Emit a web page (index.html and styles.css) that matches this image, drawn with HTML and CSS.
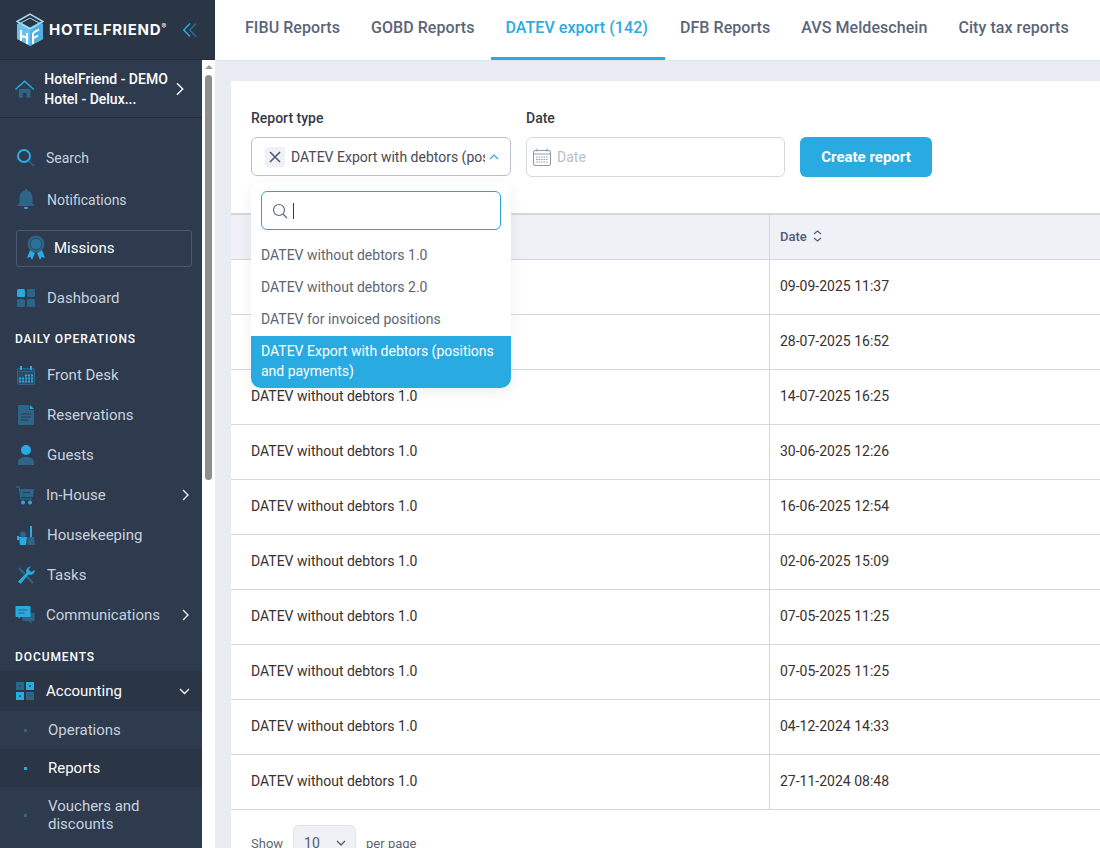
FILE: index.html
```html
<!DOCTYPE html>
<html lang="en">
<head>
<meta charset="utf-8">
<title>DATEV export</title>
<link rel="stylesheet" href="styles.css">
</head>
<body>
<div class="app">
  <aside class="sidebar">
    <div class="brand">
      <svg class="logo" width="28" height="33" viewBox="0 0 28 33"><path d="M14 5 27 11v15l-13 7-13-7V11z" fill="#6cc0ea"/><path d="M14 10 27 11v15l-13 7z" fill="#4fb0e2"/><path d="M1 8.500 14 1l13 7.500L14 16z" fill="none" stroke="#a9dcf3" stroke-width="1.500"/><path d="M5 10 14 5l9 5-9 5z" fill="#2a3546" stroke="#8fd0ee"/><path d="M5 17v11M11 20v11M5 23l6 1.500M17 20v11M17 20l6-3.500M17 25.500l5-3" stroke="#fff" stroke-width="2" fill="none"/></svg>
      <span class="brand-name">HOTELFRIEND<sup>®</sup></span>
      <svg class="collapse" width="14" height="14" viewBox="0 0 14 14" fill="none" stroke-width="1.500"><path d="M7 .5.8 7 7 13.500" stroke="#29abe2"/><path d="M13 .5 6.800 7 13 13.500" stroke="#2a6f96"/></svg>
    </div>
    <div class="side-body">
      <div class="side-column">
        <div class="hotel">
          <svg width="20" height="18" viewBox="0 0 20 18"><path d="M4 9h12v9h-4v-5H8v5H4z" fill="#2e6488"/><path d="M0 9 10 0l10 9-1 1-9-8-9 8z" fill="#29abe2"/></svg>
          <div class="hotel-name">HotelFriend - DEMO Hotel - Delux...</div>
          <svg width="9" height="14" viewBox="0 0 9 14" fill="none" stroke="#fff" stroke-width="1.500"><path d="m1 1 6 6-6 6"/></svg>
        </div>
        <nav class="nav">
          <a class="item item-search"><svg class="ico" width="20" height="20" viewBox="0 0 20 20" fill="none"><circle cx="8" cy="8" r="6" stroke="#29abe2" stroke-width="2"/><path d="m13 13 5 5" stroke="#2e6488" stroke-width="1.500"/></svg><span class="tight">Search</span></a>
          <a class="item item-notif"><svg class="ico" width="20" height="24" viewBox="0 0 20 24"><path d="M10 1c1 0 1.500.7 1.500 1.500C15 3.500 16.500 6 16.500 10v5l2.500 3H1l2.500-3v-5C3.500 6 5 3.500 8.500 2.500 8.500 1.700 9 1 10 1z" fill="#2e6488"/><path d="M8 19h4l-.5 2h-3z" fill="#29abe2"/></svg><span class="tight">Notifications</span></a>
          <a class="missions"><svg width="20" height="26" viewBox="0 0 20 26"><path d="M4 15 1 23l3.500-1L6 25l3-7zM16 15l3 8-3.500-1L14 25l-3-7z" fill="#29abe2"/><circle cx="10" cy="9" r="8.500" fill="#2e6488"/><circle cx="10" cy="9" r="5.800" fill="#2f7098" stroke="#24506f"/></svg><span>Missions</span></a>
          <a class="item item-dash"><svg class="ico" width="18" height="18" viewBox="0 0 18 18"><rect width="8" height="8" rx="1.500" fill="#29abe2"/><rect x="10" width="8" height="8" rx="1.500" fill="#2e6488"/><rect y="10" width="8" height="8" rx="1.500" fill="#2e6488"/><rect x="10" y="10" width="8" height="8" rx="1.500" fill="#2e6488"/></svg><span>Dashboard</span></a>
          <div class="section">DAILY OPERATIONS</div>
          <a class="item"><svg class="ico" width="18" height="19" viewBox="0 0 18 19"><rect x=".5" y="2.500" width="17" height="16" rx="1" fill="#2a4a66" stroke="#2e6488"/><rect x="3" width="2" height="4" fill="#29abe2"/><rect x="13" width="2" height="4" fill="#29abe2"/><path d="M2 5.500h14" stroke="#2e6488"/><path d="M8 9.500h8M2 12.500h14M2 15.500h14" stroke="#29abe2" stroke-width="2" stroke-dasharray="2 1"/></svg><span>Front Desk</span></a>
          <a class="item"><svg class="ico" width="18" height="20" viewBox="0 0 18 20"><path d="M2 0h10v4a1 1 0 0 0 1 1h4v14a1 1 0 0 1-1 1H2a1 1 0 0 1-1-1V1a1 1 0 0 1 1-1z" fill="#2e6488"/><path d="M13 0l4 4h-4z" fill="#29abe2"/><path d="M4 9h10M4 12h10M4 15h7" stroke="#2e3a4d" stroke-width="1"/></svg><span>Reservations</span></a>
          <a class="item"><svg class="ico" width="18" height="20" viewBox="0 0 18 20"><circle cx="9" cy="5" r="5" fill="#29abe2"/><path d="M1 20v-3c0-3 3-5 8-5s8 2 8 5v3z" fill="#2e6488"/></svg><span>Guests</span></a>
          <a class="item item-shift"><svg class="ico" width="20" height="19" viewBox="0 0 20 19"><path d="M1 1h3l2 12h11" fill="none" stroke="#2e6488" stroke-width="1.300"/><path d="M5 3h14l-1 8H6z" fill="#2e6488"/><path d="M8 6.500h7" stroke="#2e3a4d"/><circle cx="8" cy="16.500" r="2" fill="#29abe2"/><circle cx="15" cy="16.500" r="2" fill="#29abe2"/></svg><span class="grow">In-House</span><svg class="chev" width="7" height="12" viewBox="0 0 7 12" fill="none" stroke="#fff" stroke-width="1.300"><path d="m1 1 5 5-5 5"/></svg></a>
          <a class="item"><svg class="ico" width="18" height="19" viewBox="0 0 18 19"><rect x="13" width="2" height="11" fill="#29abe2"/><path d="M11 11h6l1 8h-8z" fill="#2e6488"/><path d="M2 11h8l-1 8H3z" fill="#29abe2"/><rect y="10" width="2" height="4" fill="#29abe2"/><circle cx="6" cy="8.500" r="3" fill="#2e6488"/></svg><span>Housekeeping</span></a>
          <a class="item"><svg class="ico" width="18" height="19" viewBox="0 0 18 19"><path d="m2 2 14 15" stroke="#2e6488" stroke-width="2.200"/><path d="M18 4a4.800 4.800 0 0 1-6.500 4.500L3.500 18 1 15.500 9.500 7A4.800 4.800 0 0 1 14 .5l-2.500 3 2.500 2.500z" fill="#29abe2"/></svg><span>Tasks</span></a>
          <a class="item item-shift"><svg class="ico" width="19" height="18" viewBox="0 0 19 18"><path d="M7 7h12v8h-3v3l-3-3H7z" fill="#2e6488"/><path d="M1 0h13a1 1 0 0 1 1 1v9a1 1 0 0 1-1 1H5l-2 2v-2H1a1 1 0 0 1-1-1V1a1 1 0 0 1 1-1z" fill="#29abe2"/><path d="M3 4h9M3 7h6" stroke="#2e5d80"/></svg><span class="grow">Communications</span><svg class="chev" width="7" height="12" viewBox="0 0 7 12" fill="none" stroke="#fff" stroke-width="1.300"><path d="m1 1 5 5-5 5"/></svg></a>
          <div class="section section-docs">DOCUMENTS</div>
          <a class="item item-shift item-open"><svg class="ico" width="18" height="18" viewBox="0 0 18 18"><rect width="8" height="8" fill="#2e6488"/><rect x="10" width="8" height="8" fill="#29abe2"/><rect y="10" width="8" height="8" fill="#29abe2"/><rect x="10" y="10" width="8" height="8" fill="#2e6488"/><path d="M3 4h2M13 4h2M14 3v2M3 14h2M4 13v2M13 14h2" stroke="#1f4a68"/></svg><span class="grow">Accounting</span><svg class="chev-down" width="11" height="7" viewBox="0 0 11 7" fill="none" stroke="#fff" stroke-width="1.300"><path d="m1 1 4.500 4.500L10 1"/></svg></a>
          <a class="sub"><i class="dot"></i><span>Operations</span></a>
          <a class="sub sub-active"><i class="dot"></i><span>Reports</span></a>
          <a class="sub sub-wrap"><i class="dot"></i><span>Vouchers and discounts</span></a>
        </nav>
      </div>
      <div class="scrollbar"><div class="scroll-arrow"></div><div class="scroll-thumb"></div></div>
    </div>
  </aside>
  <main class="main">
    <header class="tabs">
      <a class="tab">FIBU Reports</a>
      <a class="tab">GOBD Reports</a>
      <a class="tab tab-active">DATEV export (142)</a>
      <a class="tab">DFB Reports</a>
      <a class="tab">AVS Meldeschein</a>
      <a class="tab">City tax reports</a>
    </header>
    <section class="content">
      <div class="card">
        <div class="filters">
          <div class="field field-type">
            <label class="label">Report type</label>
            <div class="select">
              <span class="clear"><svg width="12" height="12" viewBox="0 0 12 12" fill="none" stroke="#4d5b78" stroke-width="1.600"><path d="m1 1 10 10M11 1 1 11"/></svg></span>
              <span class="select-value">DATEV Export with debtors (positions and payments)</span>
              <svg width="10" height="6" viewBox="0 0 10 6" fill="none" stroke="#29abe2" stroke-width="1.200"><path d="m1 5 4-4 4 4"/></svg>
            </div>
            <div class="dropdown">
              <div class="search-box">
                <svg width="16" height="16" viewBox="0 0 16 16" fill="none" stroke="#5c6b85" stroke-width="1.200"><circle cx="7" cy="7" r="5.500"/><path d="m11 11 4 4"/></svg>
                <span class="caret"></span>
              </div>
              <ul class="options">
                <li class="option">DATEV without debtors 1.0</li>
                <li class="option">DATEV without debtors 2.0</li>
                <li class="option">DATEV for invoiced positions</li>
                <li class="option option-active">DATEV Export with debtors (positions and payments)</li>
              </ul>
            </div>
          </div>
          <div class="field field-date">
            <label class="label">Date</label>
            <div class="date-input">
              <svg width="18" height="18" viewBox="0 0 18 18" fill="none" stroke="#8f99ab"><rect x=".5" y="2.500" width="17" height="15" rx="1.500"/><path d="M4 .5v3M14 .5v3M.5 6h17"/><path d="M3 9h12M3 11.500h12M3 14h12" stroke-dasharray="1.500 1"/></svg>
              <span>Date</span>
            </div>
          </div>
          <button class="create">Create report</button>
        </div>
        <div class="table">
          <div class="row row-head"><div class="cell cell-type"></div><div class="cell cell-date">Date <svg width="9" height="12" viewBox="0 0 9 12" fill="none" stroke="#4d5b78" stroke-width="1.100"><path d="m1 4 3.500-3L8 4M1 8l3.500 3L8 8"/></svg></div></div>
          <div class="row"><div class="cell cell-type">DATEV without debtors 1.0</div><div class="cell cell-date">09-09-2025 11:37</div></div>
          <div class="row"><div class="cell cell-type">DATEV without debtors 1.0</div><div class="cell cell-date">28-07-2025 16:52</div></div>
          <div class="row"><div class="cell cell-type">DATEV without debtors 1.0</div><div class="cell cell-date">14-07-2025 16:25</div></div>
          <div class="row"><div class="cell cell-type">DATEV without debtors 1.0</div><div class="cell cell-date">30-06-2025 12:26</div></div>
          <div class="row"><div class="cell cell-type">DATEV without debtors 1.0</div><div class="cell cell-date">16-06-2025 12:54</div></div>
          <div class="row"><div class="cell cell-type">DATEV without debtors 1.0</div><div class="cell cell-date">02-06-2025 15:09</div></div>
          <div class="row"><div class="cell cell-type">DATEV without debtors 1.0</div><div class="cell cell-date">07-05-2025 11:25</div></div>
          <div class="row"><div class="cell cell-type">DATEV without debtors 1.0</div><div class="cell cell-date">07-05-2025 11:25</div></div>
          <div class="row"><div class="cell cell-type">DATEV without debtors 1.0</div><div class="cell cell-date">04-12-2024 14:33</div></div>
          <div class="row"><div class="cell cell-type">DATEV without debtors 1.0</div><div class="cell cell-date">27-11-2024 08:48</div></div>
        </div>
        <div class="pager">
          <span>Show</span>
          <span class="page-size">10 <svg width="10" height="6" viewBox="0 0 10 6" fill="none" stroke="#4d5b78" stroke-width="1.300"><path d="m1 1 4 4 4-4"/></svg></span>
          <span>per page</span>
        </div>
      </div>
    </section>
  </main>
</div>
</body>
</html>
```

FILE: styles.css
```css
* { box-sizing: border-box; }
html, body { margin: 0; height: 848px; overflow: hidden; }
body { font-family: Roboto, "Liberation Sans", sans-serif; font-size: 14px; color: #3a3030; background: #fff; }
.app { display: flex; width: 1100px; height: 848px; overflow: hidden; }

.sidebar { flex: 0 0 215px; width: 215px; height: 848px; display: flex; flex-direction: column; overflow: hidden; color: #c8d2de; }
.brand { height: 60px; flex: none; background: #2a3546; border-bottom: 1px solid #222c3b; display: flex; align-items: center; padding-left: 16px; }
.brand-name { margin-left: 5px; color: #fff; font-family: Inter, Roboto, sans-serif; font-size: 15px; font-weight: 700; letter-spacing: .75px; }
.brand-name sup { font-size: 7px; font-weight: 400; vertical-align: 6px; letter-spacing: 0; }
.collapse { margin-left: 17px; }
.side-body { flex: 1; min-height: 0; display: flex; }
.side-column { flex: 0 0 202px; background: #2e3a4d; overflow: hidden; }
.hotel { height: 58px; border-bottom: 1px solid #222c3b; display: flex; align-items: center; padding: 0 17px 0 15px; }
.hotel-name { width: 125px; margin: 0 7px 0 10px; flex: none; font-size: 14px; font-weight: 500; line-height: 20px; color: #fff; }
.nav { display: flex; flex-direction: column; padding-top: 19px; }
.item { height: 40px; display: flex; align-items: center; padding-left: 16px; font-size: 15px; flex: none; }
.tight { font-size: 14px; }
.item .ico { width: 20px; flex: none; margin-right: 11px; }
.item-shift .ico { margin-left: -1px; margin-right: 11px; }
.item-search { height: 42px; }
.item-search .ico { margin-right: 10px; }
.item-notif { height: 42px; }
.item-dash { height: 42px; margin-top: 10px; }
.grow { flex: 1; }
.chev { margin-right: 13px; }
.chev-down { margin-right: 12px; }
.missions { height: 37px; margin: 9px 10px 0 16px; padding: 0 0 2px 9px; border: 1px solid #4a5870; border-radius: 3px; display: flex; align-items: center; gap: 8px; color: #fff; font-size: 15px; flex: none; }
.section { height: 20px; line-height: 20px; margin: 10px 0 6px; padding-left: 15px; color: #fff; font-size: 12px; font-weight: 500; letter-spacing: .9px; flex: none; }
.section-docs { margin: 12px 0 4px; }
.item-open { background: #2a3546; color: #fff; }
.sub { height: 38px; display: flex; align-items: center; padding-left: 24px; color: #c8d2de; font-size: 15px; flex: none; }
.dot { width: 3px; height: 3px; background: #2e6488; margin-right: 21px; flex: none; }
.sub-active { background: #2a3546; color: #fff; }
.sub-active .dot { background: #29abe2; }
.sub-wrap { height: 56px; line-height: 18px; }
.sub-wrap span { width: 110px; }

.scrollbar { flex: 0 0 13px; background: #fff; padding: 0 3px; }
.scroll-arrow { margin: 5px auto 0; width: 0; height: 0; border: 4px solid transparent; border-top: 0; border-bottom: 4px solid #9a9a9a; }
.scroll-thumb { width: 7px; height: 405px; margin-top: 6px; background: #8e8e8e; border-radius: 4px; }

.main { flex: 1; min-width: 0; background: #e9ecf2; display: flex; flex-direction: column; }
.tabs { height: 61px; background: #fff; border-bottom: 1px solid #dfe3ea; display: flex; padding-left: 15px; flex: none; white-space: nowrap; }
.tab { height: 60px; padding: 0 16px 5px 15px; display: flex; align-items: center; font-size: 16px; font-weight: 500; color: #5a6579; letter-spacing: .06px; }
.tab-active { margin-left: 1px; padding: 0 17px 2px 14px; color: #29abe2; border-bottom: 3px solid #29abe2; }
.content { padding: 20px 0 0 16px; flex: 1; overflow: hidden; }
.card { background: #fff; height: 800px; }

.filters { display: flex; height: 132px; padding: 29px 0 0 20px; }
.field { position: relative; }
.field-type { width: 260px; }
.field-date { width: 259px; margin-left: 15px; }
.label { display: block; height: 17px; line-height: 17px; margin-bottom: 10px; font-size: 14px; font-weight: 500; color: #363a45; }
.select { height: 39px; border: 1px solid #b8c0cc; border-radius: 6px; display: flex; align-items: center; padding: 0 11px 0 13px; color: #4a4a55; }
.clear { width: 20px; height: 20px; background: #f0f1f6; border-radius: 3px; display: flex; align-items: center; justify-content: center; flex: none; margin-right: 6px; }
.select-value { flex: 1; min-width: 0; overflow: hidden; white-space: nowrap; margin-right: 4px; }
.dropdown { position: absolute; left: 0; top: 72px; width: 260px; height: 206px; background: #fff; border-radius: 10px; box-shadow: 0 4px 14px rgba(40,50,70,.08); z-index: 3; padding-top: 9px; }
.search-box { height: 39px; margin: 0 10px; border: 1px solid #29a3d8; border-radius: 6px; display: flex; align-items: center; padding-left: 10px; gap: 5px; }
.caret { width: 1px; height: 16px; background: #3a3a3a; }
.options { list-style: none; margin: 9px 0 0; padding: 0; color: #5c6574; }
.option { height: 32px; line-height: 32px; padding-left: 10px; }
.option-active { height: 52px; margin-top: 1px; line-height: 20px; padding: 5px 10px; color: #fff; background: #29abe2; border-radius: 0 0 10px 10px; }
.date-input { height: 40px; border: 1px solid #d3d8e0; border-radius: 6px; display: flex; align-items: center; padding-left: 6px; gap: 6px; color: #b7bfcc; }
.create { align-self: flex-start; margin: 27px 0 0 15px; width: 132px; height: 40px; border: 0; border-radius: 6px; background: #29abe2; color: #fff; font-family: inherit; font-size: 15px; font-weight: 700; }

.table { border-top: 2px solid #d3d8e0; }
.row { display: flex; height: 55px; border-bottom: 1px solid #d3d8e0; }
.row-head { height: 45px; background: #f0f1f6; color: #4d5b78; font-size: 13px; font-weight: 500; }
.cell { display: flex; align-items: center; gap: 6px; padding-bottom: 2px; }
.cell-type { width: 539px; padding-left: 20px; border-right: 1px solid #d3d8e0; }
.cell-date { padding-left: 10px; }
.pager { display: flex; align-items: center; height: 51px; padding: 15px 0 0 20px; gap: 10px; color: #5c6574; font-size: 13px; }
.page-size { width: 63px; height: 36px; background: #f0f1f6; border: 1px solid #dfe3ea; border-radius: 6px; display: flex; align-items: center; justify-content: space-between; padding: 0 9px 0 10px; color: #4d5b78; font-size: 14px; }
```
